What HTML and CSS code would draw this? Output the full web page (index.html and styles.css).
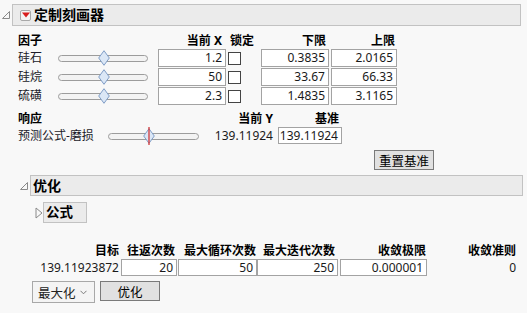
FILE: index.html
```html
<!DOCTYPE html>
<html lang="zh">
<head>
<meta charset="utf-8">
<link rel="stylesheet" href="styles.css">
</head>
<body>
<div class="page">
  <div class="outline-head">
    <svg class="tri" width="10" height="10" viewBox="0 0 10 10"><polygon points="8.5,1.5 8.5,8.5 1.5,8.5" fill="none" stroke="#8a8a8a" stroke-width="1"/></svg>
    <div class="head-box main-box">
      <span class="menu-btn"><svg width="8" height="6" viewBox="0 0 8 6"><polygon points="0,0.5 8,0.5 4,5.5" fill="#d81e1e"/></svg></span>
      <span class="title">定制刻画器</span>
    </div>
  </div>

  <div class="factors">
    <div class="hd">因子</div><div></div><div class="hd r pr4">当前 X</div><div class="hd lock">锁定</div><div class="hd r pr3">下限</div><div class="hd r pr2">上限</div>

    <div class="lbl">硅石</div>
    <div class="slider-cell"><div class="slider s90"><svg class="thumb" style="left:39px" width="12" height="16" viewBox="0 0 12 16"><polygon points="6,0.7 11.3,8 6,15.3 0.7,8" fill="#dbe7f6" stroke="#7f9dc6" stroke-width="1"/></svg></div></div>
    <div class="box">1.2</div><div class="chk-cell"><span class="chk"></span></div><div class="box">0.3835</div><div class="box">2.0165</div>

    <div class="lbl">硅烷</div>
    <div class="slider-cell"><div class="slider s90"><svg class="thumb" style="left:39px" width="12" height="16" viewBox="0 0 12 16"><polygon points="6,0.7 11.3,8 6,15.3 0.7,8" fill="#dbe7f6" stroke="#7f9dc6" stroke-width="1"/></svg></div></div>
    <div class="box">50</div><div class="chk-cell"><span class="chk"></span></div><div class="box">33.67</div><div class="box">66.33</div>

    <div class="lbl">硫磺</div>
    <div class="slider-cell"><div class="slider s90"><svg class="thumb" style="left:39px" width="12" height="16" viewBox="0 0 12 16"><polygon points="6,0.7 11.3,8 6,15.3 0.7,8" fill="#dbe7f6" stroke="#7f9dc6" stroke-width="1"/></svg></div></div>
    <div class="box">2.3</div><div class="chk-cell"><span class="chk"></span></div><div class="box">1.4835</div><div class="box">3.1165</div>
  </div>

  <div class="responses">
    <div class="hd">响应</div><div></div><div class="hd r">当前 Y</div><div class="hd r pr3">基准</div>
    <div class="lbl">预测公式-磨损</div>
    <div class="slider-cell"><div class="slider s91"><svg class="thumb" style="left:34px" width="12" height="18" viewBox="0 0 12 18"><polygon points="6,1.7 11.3,9 6,16.3 0.7,9" fill="#dbe7f6" stroke="#7f9dc6" stroke-width="1"/><line x1="6" y1="0" x2="6" y2="18" stroke="#d42a2a" stroke-width="1.2"/></svg></div></div>
    <div class="val">139.11924</div>
    <div class="box">139.11924</div>
  </div>

  <div class="reset-row"><span class="btn reset">重置基准</span></div>

  <div class="outline-head opt-head">
    <svg class="tri" width="10" height="10" viewBox="0 0 10 10"><polygon points="8.5,1.5 8.5,8.5 1.5,8.5" fill="none" stroke="#8a8a8a" stroke-width="1"/></svg>
    <div class="head-box opt-box"><span class="title">优化</span></div>
  </div>

  <div class="sub-head">
    <svg class="tri-r" width="8" height="12" viewBox="0 0 8 12"><polygon points="1,1 7,6 1,11" fill="none" stroke="#8a8a8a" stroke-width="1"/></svg>
    <div class="sub-box">公式</div>
  </div>

  <div class="opt-table">
    <div class="hd r pr2">目标</div><div class="hd r pr2">往返次数</div><div class="hd r pr1">最大循环次数</div><div class="hd r pr3">最大迭代次数</div><div class="hd r pr3">收敛极限</div><div class="hd r">收敛准则</div>
    <div class="val pr2">139.11923872</div><div class="box">20</div><div class="box">50</div><div class="box">250</div><div class="box">0.000001</div><div class="val">0</div>
  </div>

  <div class="controls">
    <div class="dropdown">最大化<svg width="7" height="5" viewBox="0 0 7 5"><polyline points="0.5,0.8 3.5,3.8 6.5,0.8" fill="none" stroke="#7a7a7a" stroke-width="1"/></svg></div>
    <span class="btn optimize">优化</span>
  </div>
</div>
</body>
</html>
```

FILE: styles.css
```css
* { box-sizing: border-box; }
html, body { margin: 0; padding: 0; }
body {
  background: #f8f8f8;
  font-family: "Noto Sans", "Noto Sans CJK SC", sans-serif;
  font-size: 12px;
  color: #111;
  width: 527px;
  height: 313px;
  overflow: hidden;
}
.page { padding-top: 4px; }

.outline-head { display: flex; align-items: center; }
.tri { margin-left: 1px; margin-right: 1px; flex: none; }
.head-box {
  height: 22px;
  background: #ebebeb;
  border: 1px solid #c2c2c2;
  display: flex;
  align-items: center;
}
.main-box { width: 509px; padding-left: 7px; }
.menu-btn {
  width: 11px; height: 11px;
  border: 1px solid #a8a8a8;
  background: #f4f4f4;
  border-radius: 2px;
  display: flex; align-items: center; justify-content: center;
  margin-right: 3px;
}
.title { font-weight: bold; font-size: 14px; line-height: 20px; color: #000; }

.hd { font-weight: bold; line-height: 16px; height: 16px; white-space: nowrap; color: #000; }
.r { text-align: right; }
.pr1 { padding-right: 1px; }
.pr2 { padding-right: 2px; }
.pr3 { padding-right: 3px; }
.pr4 { padding-right: 4px; }
.lbl { line-height: 18px; height: 18px; white-space: nowrap; color: #1b1b2a; }

.factors {
  margin-top: 7px;
  margin-left: 18px;
  display: grid;
  grid-template-columns: 40px 100px 68px 35px 68px 68px;
  column-gap: 0;
  grid-auto-rows: auto;
}
.factors .hd { margin-bottom: 0; }
.factors > .box { margin-bottom: 1px; }
.factors > div:nth-child(n+7) { height: 18px; }
.factors .box:nth-of-type(6n) { margin-left: 2px; }
.lock { padding-left: 4px; }

.slider-cell { display: flex; align-items: center; height: 18px; }
.slider {
  position: relative;
  height: 7px;
  border: 1.5px solid #9c9c9c;
  border-radius: 4px;
  background: #f3f3f3;
}
.s90 { width: 90px; }
.s91 { width: 91px; }
.thumb { position: absolute; top: -6px; }
.s91 .thumb { top: -7px; }

.box {
  height: 17px;
  background: #fff;
  border: 1px solid #a3a3a3;
  text-align: right;
  padding-right: 3px;
  line-height: 15px;
  color: #1a1a1a;
  white-space: nowrap;
}
.chk-cell { display: flex; align-items: center; padding-left: 2px; height: 17px; }
.chk {
  width: 13px; height: 13px;
  background: #fff;
  border: 1px solid #444;
}

.factors > div:nth-child(6n+5) { margin-left: 0; }
.factors > div:nth-child(6n+6) { margin-left: 2px; }

.responses {
  margin-top: 5px;
  margin-left: 18px;
  display: grid;
  grid-template-columns: 90px 101px 64px 69px;
  column-gap: 0;
}
.responses > .box { margin-left: 5px; }
.val { line-height: 17px; text-align: right; white-space: nowrap; color: #1a1a1a; }

.reset-row { margin-top: 5px; padding-left: 374px; height: 20px; }
.btn {
  display: inline-flex;
  align-items: center;
  justify-content: center;
  background: #e1e1e1;
  border: 1px solid #7a7a7a;
  font-size: 12.5px;
  color: #000;
}
.reset { width: 60px; height: 20px; }

.opt-head { margin-top: 5px; padding-left: 18px; }
.opt-box { width: 493px; height: 21px; padding-left: 2px; }

.sub-head { margin-top: 6px; padding-left: 35px; display: flex; align-items: center; }
.tri-r { margin-right: 0; }
.sub-box {
  width: 44px; height: 21px;
  background: #ebebeb;
  border: 1px solid #c2c2c2;
  font-weight: bold;
  font-size: 13.5px;
  line-height: 19px;
  padding-left: 2px;
  color: #000;
}

.opt-table {
  margin-top: 20px;
  margin-left: 30px;
  display: grid;
  grid-template-columns: 91px 56px 80px 81px 91px 87px;
}
.opt-table .hd { line-height: 16px; }
.opt-table > div:nth-child(9) { margin-left: 1px; }
.opt-table > div:nth-child(11) { margin-left: 2px; margin-right: 2px; }

.controls { margin-top: 5px; padding-left: 32px; display: flex; align-items: flex-start; gap: 5px; }
.dropdown {
  width: 63px; height: 22px;
  border: 1px solid #a8a8a8;
  background: #f4f4f4;
  display: flex; align-items: center; justify-content: space-between;
  padding: 0 7px 0 5px;
  font-size: 12.5px;
  color: #222;
}
.optimize { width: 60px; height: 20px; }
```
